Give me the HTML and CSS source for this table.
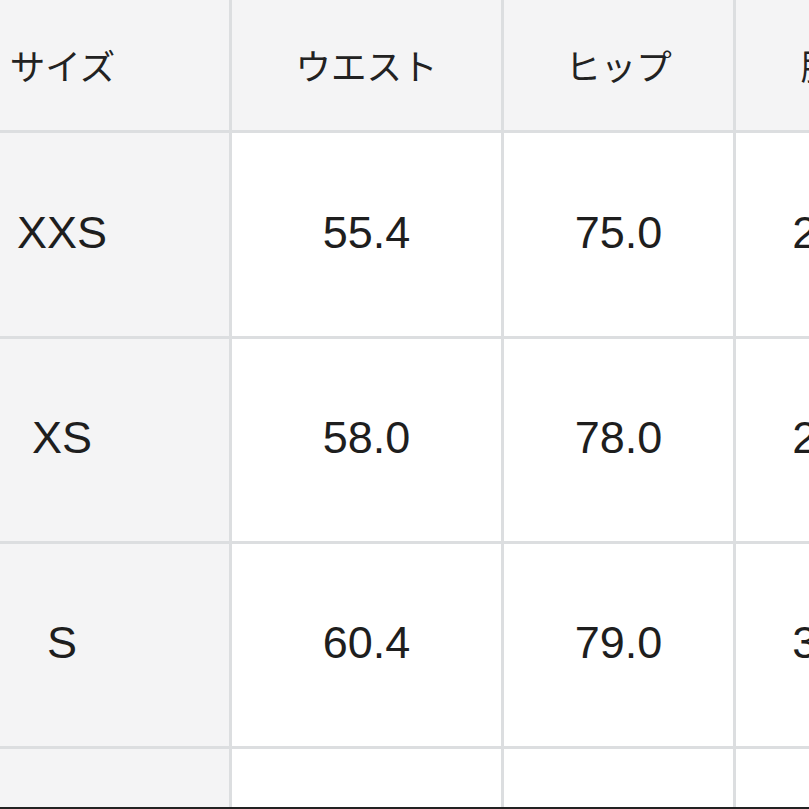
FILE: index.html
```html
<!DOCTYPE html>
<html lang="ja">
<head>
<meta charset="utf-8">
<title>サイズ表</title>
<link rel="stylesheet" href="styles.css">
</head>
<body>
<div class="page">
  <div class="frame">
    <div class="grid">
      <div class="cell head first">サイズ</div>
      <div class="cell head">ウエスト</div>
      <div class="cell head">ヒップ</div>
      <div class="cell head">股上</div>

      <div class="cell first num r1">XXS</div>
      <div class="cell num r1">55.4</div>
      <div class="cell num r1">75.0</div>
      <div class="cell num r1">25.0</div>

      <div class="cell first num r2">XS</div>
      <div class="cell num r2">58.0</div>
      <div class="cell num r2">78.0</div>
      <div class="cell num r2">26.0</div>

      <div class="cell first num r3">S</div>
      <div class="cell num r3">60.4</div>
      <div class="cell num r3">79.0</div>
      <div class="cell num r3">30.0</div>

      <div class="cell first num r4">M</div>
      <div class="cell num r4">63.0</div>
      <div class="cell num r4">82.0</div>
      <div class="cell num r4">31.0</div>
    </div>
  </div>
  <div class="bottom-bar"></div>
</div>
</body>
</html>
```

FILE: styles.css
```css
html, body {
  margin: 0;
  padding: 0;
  background: #ffffff;
}

.page {
  width: 809px;
  height: 809px;
  display: flex;
  flex-direction: column;
  overflow: hidden;
}

.frame {
  flex: 1;
  overflow: hidden;
}

.grid {
  display: grid;
  grid-template-columns: 229px 269px 229px 200px;
  grid-template-rows: 130px 203px 202px 202px 203px;
  column-gap: 3px;
  row-gap: 3px;
  background: #dcdee0;
  width: 936px;
}

.cell {
  background: #ffffff;
  color: #1e1e1e;
  display: flex;
  align-items: center;
  justify-content: center;
  font-family: "Liberation Sans", Arial, "Noto Sans CJK JP", sans-serif;
  font-size: 45px;
}

.head {
  background: #f4f4f5;
  font-family: "Noto Sans CJK JP", "Noto Sans", sans-serif;
  font-size: 35.5px;
  font-weight: 400;
  color: #222222;
  padding-bottom: 1px;
}

.first {
  background: #f4f4f5;
  padding-right: 105px;
}

.head.first {
  padding-right: 104px;
}

.r1, .r2, .r3, .r4 {
  padding-bottom: 4px;
}

.bottom-bar {
  height: 2px;
  background: #222222;
  flex: none;
}
```
